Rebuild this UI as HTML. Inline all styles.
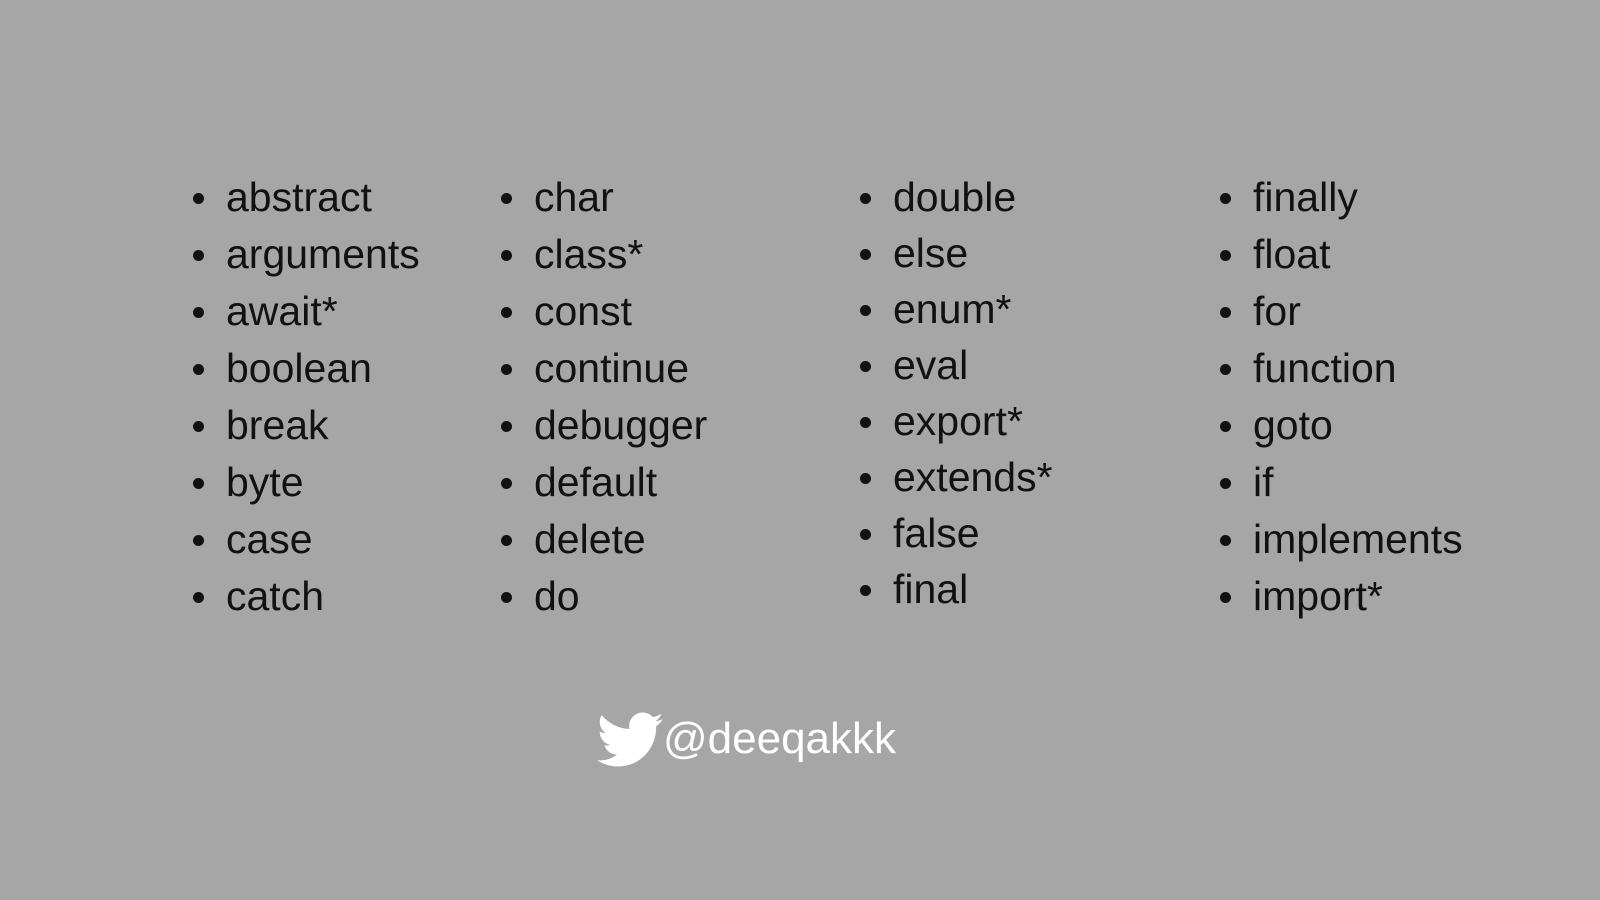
<!DOCTYPE html>
<html><head><style>
body{margin:0;width:1600px;height:900px;background:#a6a6a6;overflow:hidden;font-family:"Liberation Sans",Arial,sans-serif;position:relative}
.col{position:absolute;margin:0;padding:0;list-style:none;color:#111;font-size:41px}
.col li{position:relative;height:57px;line-height:57px}
.col li:before{content:"";position:absolute;left:-33px;top:24px;width:11px;height:11px;border-radius:50%;background:#111}
.c3 li{height:56px;line-height:56px}
.tw{position:absolute;left:663px;top:712px;color:#fff;font-size:44px;line-height:54px}
</style></head><body>
<ul class="col" style="left:226px;top:169px"><li>abstract</li><li>arguments</li><li>await*</li><li>boolean</li><li>break</li><li>byte</li><li>case</li><li>catch</li></ul>
<ul class="col" style="left:534px;top:169px"><li>char</li><li>class*</li><li>const</li><li>continue</li><li>debugger</li><li>default</li><li>delete</li><li>do</li></ul>
<ul class="col c3" style="left:893px;top:169px"><li>double</li><li>else</li><li>enum*</li><li>eval</li><li>export*</li><li>extends*</li><li>false</li><li>final</li></ul>
<ul class="col" style="left:1253px;top:169px"><li>finally</li><li>float</li><li>for</li><li>function</li><li>goto</li><li>if</li><li>implements</li><li>import*</li></ul>
<svg style="position:absolute;left:597px;top:712px" width="66" height="56" viewBox="0 0 24 20"><path fill="#fff" d="M24 2.4c-.9.4-1.8.7-2.8.8 1-.6 1.8-1.6 2.2-2.7-1 .6-2 1-3.1 1.2C19.4.7 18.1 0 16.6 0c-2.7 0-4.9 2.2-4.9 4.9 0 .4 0 .8.1 1.1C7.7 5.8 4.1 3.9 1.7.9c-.4.7-.7 1.6-.7 2.5 0 1.7.9 3.2 2.2 4.1-.8 0-1.6-.2-2.2-.6v.1c0 2.4 1.7 4.4 3.9 4.8-.4.1-.8.2-1.3.2-.3 0-.6 0-.9-.1.6 2 2.4 3.4 4.6 3.4-1.7 1.3-3.8 2.1-6.1 2.1-.4 0-.8 0-1.2-.1C2.2 18.8 4.8 19.6 7.5 19.6c9.1 0 14-7.5 14-14v-.6c1-.7 1.8-1.6 2.5-2.6z"/></svg>
<div class="tw">@deeqakkk</div>
</body></html>
